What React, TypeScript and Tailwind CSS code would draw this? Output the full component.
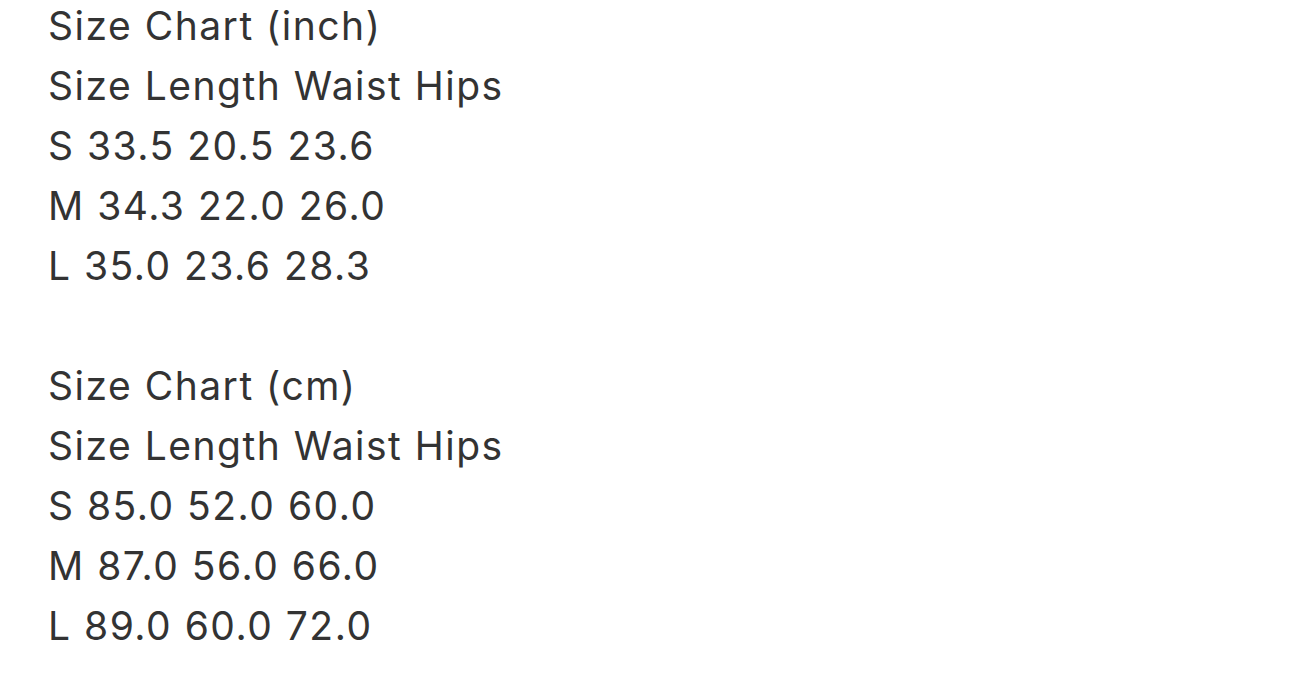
export default function App() {
  const lines = [
    "Size Chart (inch)",
    "Size Length Waist Hips",
    "S 33.5 20.5 23.6",
    "M 34.3 22.0 26.0",
    "L 35.0 23.6 28.3",
    "",
    "Size Chart (cm)",
    "Size Length Waist Hips",
    "S 85.0 52.0 60.0",
    "M 87.0 56.0 66.0",
    "L 89.0 60.0 72.0",
  ];
  return (
    <div className="w-[1290px] h-[684px] bg-white overflow-hidden pl-[48px] text-[#333333] text-[39px] tracking-[1.5px] leading-[60px] font-['Inter',sans-serif]">
      <div className="-mt-[4px]">
        {lines.map((l, i) => (
          <div key={i} className="h-[60px] whitespace-pre">{l}</div>
        ))}
      </div>
    </div>
  );
}
